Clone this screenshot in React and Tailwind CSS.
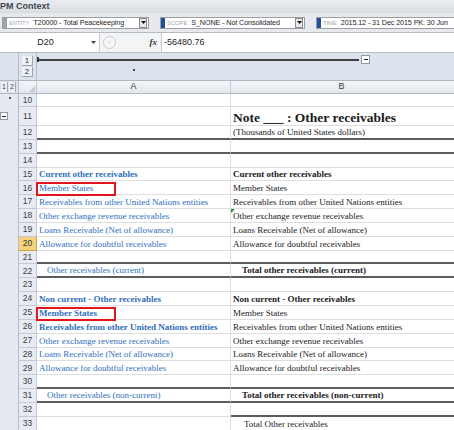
import React from 'react';

const serif = { fontFamily: '"Liberation Serif", "Times New Roman", serif' };
const sans = { fontFamily: '"Liberation Sans", Arial, sans-serif' };

// h: row height class, a / b: cell content, aLine / bLine: dark bottom edge
const rows = [
    { n: 10, h: 'h-[13px]' },
    { n: 11, h: 'h-[19px]', b: { t: 'Note ___ : Other receivables', c: 'font-bold text-[13.5px]' } },
    { n: 12, h: 'h-[13.85px]', b: { t: '(Thousands of United States dollars)' }, aLine: true, bLine: true },
    { n: 13, h: 'h-[13.85px]', aLine: true, bLine: true },
    { n: 14, h: 'h-[13.85px]' },
    { n: 15, h: 'h-[13.85px]', a: { t: 'Current other receivables', c: 'font-bold' }, b: { t: 'Current other receivables', c: 'font-bold' } },
    { n: 16, h: 'h-[13.85px]', a: { t: 'Member States' }, b: { t: 'Member States' }, box: true },
    { n: 17, h: 'h-[13.85px]', a: { t: 'Receivables from other United Nations entities' }, b: { t: 'Receivables from other United Nations entities' } },
    { n: 18, h: 'h-[13.85px]', a: { t: 'Other exchange revenue receivables' }, b: { t: 'Other exchange revenue receivables' }, flag: true },
    { n: 19, h: 'h-[13.85px]', a: { t: 'Loans Receivable (Net of allowance)' }, b: { t: 'Loans Receivable (Net of allowance)' } },
    { n: 20, h: 'h-[13.85px]', a: { t: 'Allowance for doubtful receivables' }, b: { t: 'Allowance for doubtful receivables' }, active: true },
    { n: 21, h: 'h-[13.85px]', aLine: true, bLine: true },
    { n: 22, h: 'h-[13.85px]', a: { t: 'Other receivables (current)', c: 'pl-[8px]' }, b: { t: 'Total other receivables (current)', c: 'font-bold pl-[9px]' }, aLine: true, bLine: true },
    { n: 23, h: 'h-[13.85px]' },
    { n: 24, h: 'h-[13.85px]', a: { t: 'Non current - Other receivables', c: 'font-bold' }, b: { t: 'Non current - Other receivables', c: 'font-bold' } },
    { n: 25, h: 'h-[13.85px]', a: { t: 'Member States', c: 'font-bold' }, b: { t: 'Member States' }, box: true },
    { n: 26, h: 'h-[13.85px]', a: { t: 'Receivables from other United Nations entities', c: 'font-bold' }, b: { t: 'Receivables from other United Nations entities' } },
    { n: 27, h: 'h-[13.85px]', a: { t: 'Other exchange revenue receivables' }, b: { t: 'Other exchange revenue receivables' } },
    { n: 28, h: 'h-[13.85px]', a: { t: 'Loans Receivable (Net of allowance)' }, b: { t: 'Loans Receivable (Net of allowance)' } },
    { n: 29, h: 'h-[13.85px]', a: { t: 'Allowance for doubtful receivables' }, b: { t: 'Allowance for doubtful receivables' } },
    { n: 30, h: 'h-[13.85px]', aLine: true, bLine: true },
    { n: 31, h: 'h-[13.85px]', a: { t: 'Other receivables (non-current)', c: 'pl-[8px]' }, b: { t: 'Total other receivables (non-current)', c: 'font-bold pl-[9px]' }, aLine: true, bLine: true },
    { n: 32, h: 'h-[13.85px]', bLine: true },
    { n: 33, h: 'h-[13.85px]', b: { t: 'Total Other receivables', c: 'pl-[11px]' } },
];

function Combo({ label, value, mark, width, arrow = true }) {
    return (
        <div className={`flex items-center h-[12px] bg-white border border-[#9a9fa6] shrink-0 ${width}`}>
            <div className={`w-[4px] h-full ${mark}`} />
            <span className="ml-[2px] text-[6px] text-[#a5a9ae] tracking-tight leading-none">{label}</span>
            <span className="ml-[4px] text-[7.2px] text-[#1e1e1e] whitespace-nowrap flex-1 leading-none tracking-[-0.1px]">{value}</span>
            {arrow && (
                <div className="w-[8px] h-[10px] mr-[1px] bg-[#e8e8e8] border border-[#8d8d8d] flex items-center justify-center">
                    <svg width="5" height="3" viewBox="0 0 5 3"><polygon points="0,0 5,0 2.5,3" fill="#111" /></svg>
                </div>
            )}
        </div>
    );
}

function Row({ r }) {
    const lineA = r.aLine ? 'border-b-2 border-b-[#5c5c5c]' : 'border-b border-b-[#dcdee0]';
    const lineB = r.bLine ? 'border-b-2 border-b-[#5c5c5c]' : 'border-b border-b-[#dcdee0]';
    return (
        <div className={`flex ${r.h}`}>
            <div className="w-[19px] shrink-0 bg-[#e4e9f0] border-r border-[#b4bdc9] relative">
                {r.n === 10 && <span className="absolute left-[9px] top-[3px] w-[2px] h-[2px] bg-[#555]" />}
                {r.n === 11 && (
                    <div className="absolute left-0 top-[5px] w-[8px] h-[8px] bg-white border border-[#8f98a5] flex items-center justify-center">
                        <div className="w-[4px] h-[1px] bg-[#222]" />
                    </div>
                )}
            </div>
            <div
                className={`w-[18px] shrink-0 border-r border-b flex items-center justify-center text-[8.5px] leading-none ${r.active ? 'bg-[#f6d37a] border-[#c9a64a] text-[#333]' : 'bg-[#e8ecf2] border-[#c3cad3] text-[#3c3c3c]'}`}
                style={sans}
            >
                {r.n}
            </div>
            <div className={`w-[194px] shrink-0 relative border-r border-r-[#dcdee0] ${lineA} flex items-end pl-[2px] pb-[1px]`} style={serif}>
                {r.a && <span className={`text-[9px] leading-none whitespace-nowrap text-[#2f6fbe] ${r.a.c || ''}`}>{r.a.t}</span>}
                {r.box && <div className="absolute left-[-1px] top-[1px] w-[80px] h-[14px] border-2 border-[#e2141c] z-10" />}
            </div>
            <div className={`flex-1 relative ${lineB} flex items-end pl-[2px] pb-[1px]`} style={serif}>
                {r.flag && (
                    <svg className="absolute left-0 top-0" width="4" height="4" viewBox="0 0 4 4"><polygon points="0,0 4,0 0,4" fill="#21913e" /></svg>
                )}
                {r.b && <span className={`text-[9px] leading-none whitespace-nowrap text-[#1a1a1a] ${r.b.c || ''}`}>{r.b.t}</span>}
            </div>
        </div>
    );
}

export default function App() {
    return (
        <div className="w-[454px] h-[430px] overflow-hidden bg-white" style={sans}>
            {/* title bar */}
            <div className="h-[13px] bg-gradient-to-b from-[#e9ecf0] to-[#d9dde3] flex items-center overflow-hidden">
                <span className="ml-[-6px] text-[9px] font-bold text-[#3d4652] leading-none">EPM Context</span>
            </div>

            {/* POV bar */}
            <div className="h-[20px] bg-[#e7e9ec] border-b border-[#b7bcc2] flex items-center pl-[2px] gap-[11px] overflow-hidden">
                <Combo label="ENTITY" value="T20000 - Total Peacekeeping" mark="bg-[#9ea3a9]" width="w-[147px]" />
                <Combo label="SCOPE" value="S_NONE - Not Consolidated" mark="bg-[#234f9c]" width="w-[145px]" />
                <Combo label="TIME" value="2015.12 - 31 Dec 2015 PK: 30 Jun" mark="bg-[#234f9c]" width="w-[150px]" arrow={false} />
            </div>

            {/* formula bar */}
            <div className="h-[20px] flex items-center bg-[#f3f4f6] border-b border-[#b7bcc2]">
                <div className="w-[100px] h-full bg-white flex items-center border-r border-[#c9cdd2]">
                    <span className="flex-1 text-center text-[9px] text-[#222]">D20</span>
                    <svg className="mr-[3px]" width="5" height="3" viewBox="0 0 5 3"><polygon points="0,0 5,0 2.5,3" fill="#444" /></svg>
                </div>
                <div className="w-[61px] h-full flex items-center">
                    <div className="ml-[3px] w-[13px] h-[13px] rounded-full border border-[#c9cdd2] bg-[#f7f7f7] flex items-center justify-center">
                        <span className="text-[6px] text-[#c6c6c6]">×</span>
                    </div>
                    <span className="ml-auto mr-[4px] text-[9px] italic font-bold text-[#333]" style={serif}>fx</span>
                </div>
                <div className="flex-1 h-full bg-white border-l border-[#c9cdd2] flex items-center pl-[2px]">
                    <span className="text-[9px] text-[#222]">-56480.76</span>
                </div>
            </div>

            {/* outline strip */}
            <div className="h-[28px] flex bg-[#dde3ec] border-b border-[#aeb7c4]">
                <div className="w-[19px] shrink-0 border-r border-[#b4bdc9]" />
                <div className="w-[18px] shrink-0 flex flex-col items-center justify-center gap-[1px] border-r border-[#b4bdc9]">
                    <div className="w-[11px] h-[10px] bg-[#eef1f5] border-r border-b border-[#9ca6b3] text-[8px] leading-[10px] text-center text-[#333]">1</div>
                    <div className="w-[11px] h-[10px] bg-[#eef1f5] border-r border-b border-[#9ca6b3] text-[8px] leading-[10px] text-center text-[#333]">2</div>
                </div>
                <div className="flex-1 flex flex-col">
                    <div className="h-[13px] flex items-center">
                        <div className="w-[2px] h-[5px] bg-[#333]" />
                        <div className="w-[320px] h-[2px] bg-[#3f3f3f]" />
                        <div className="ml-[2px] w-[9px] h-[9px] bg-white border border-[#8f98a5] flex items-center justify-center">
                            <div className="w-[4px] h-[1.5px] bg-[#222]" />
                        </div>
                    </div>
                    <div className="h-[14px] flex">
                        <div className="w-[194px] flex justify-center pt-[3px]">
                            <span className="w-[2px] h-[2px] bg-[#444]" />
                        </div>
                    </div>
                </div>
            </div>

            {/* column headers */}
            <div className="h-[13px] flex bg-gradient-to-b from-[#f3f5f8] to-[#e3e7ed] border-b border-[#b1b9c4] text-[9px] text-[#3c3c3c]">
                <div className="w-[19px] shrink-0 flex items-center gap-[1px] pl-[1px] border-r border-[#b4bdc9] bg-[#dde3ec]">
                    <div className="w-[7px] h-[10px] bg-[#eef1f5] border-r border-[#9ca6b3] text-[7px] leading-[10px] text-center">1</div>
                    <div className="w-[7px] h-[10px] bg-[#eef1f5] border-r border-[#9ca6b3] text-[7px] leading-[10px] text-center">2</div>
                </div>
                <div className="w-[18px] shrink-0 border-r border-[#c3cad3] flex items-end justify-end p-[1px]">
                    <svg width="6" height="6" viewBox="0 0 6 6"><polygon points="6,0 6,6 0,6" fill="#c4cad2" /></svg>
                </div>
                <div className="w-[194px] shrink-0 border-r border-[#c3cad3] flex items-center justify-center">A</div>
                <div className="flex-1 flex items-center justify-center pr-[2px]">B</div>
            </div>

            {/* sheet rows */}
            {rows.map((r) => (
                <Row key={r.n} r={r} />
            ))}
        </div>
    );
}
